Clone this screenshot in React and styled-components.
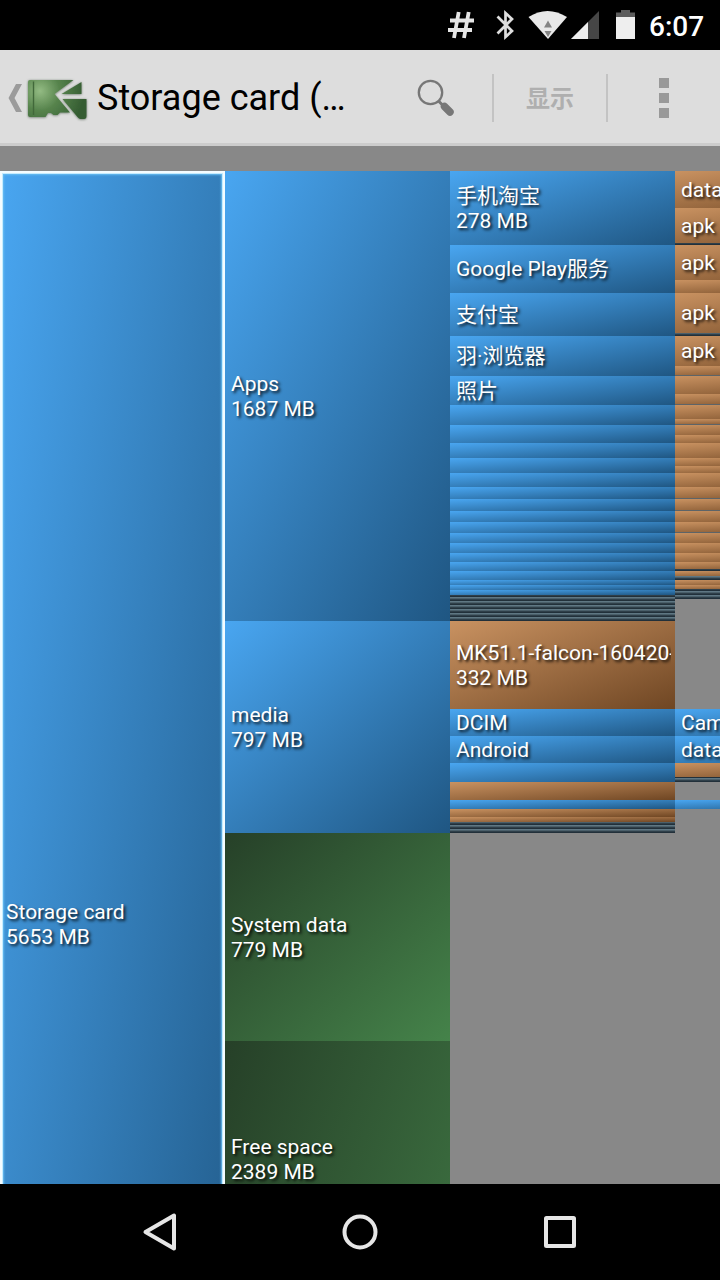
import React from "react";
import styled, { createGlobalStyle, css } from "styled-components";

const GlobalStyle = createGlobalStyle`
  * {
    box-sizing: border-box;
  }
  body {
    margin: 0;
    background: #000000;
    font-family: Roboto, "Noto Sans CJK SC", sans-serif;
  }
`;

const FILLS = {
  dir: "linear-gradient(to bottom right, #49a6f1, #1f5682)",
  file: "linear-gradient(to bottom right, #c99261, #6f4623)",
  system: "linear-gradient(to bottom right, #264028, #45834a)",
  small:
    "repeating-linear-gradient(to top, #22303a 0 1px, #2f3f49 1px 2px, #4b5f6a 2px 3px, #5f7783 3px 4px)",
  line: "#5d6468",
};

const Screen = styled.div`
  display: flex;
  flex-direction: column;
  width: 720px;
  height: 1280px;
  overflow: hidden;
  background: #888888;
`;

const StatusBar = styled.div`
  display: flex;
  flex: none;
  height: 50px;
  background: #000000;
  justify-content: flex-end;
  padding-right: 16px;
`;

const StatusIcons = styled.svg`
  width: 200px;
  height: 50px;
`;

const Clock = styled.div`
  width: 59px;
  padding-left: 4px;
  color: #ffffff;
  font-size: 28px;
  font-weight: 500;
  line-height: 54px;
  white-space: nowrap;
`;

const ActionBar = styled.header`
  display: flex;
  flex: none;
  align-items: center;
  height: 96px;
  padding-top: 2px;
  padding-left: 6px;
  background: #dddddd;
  border-bottom: 3px solid #cccccc;
`;

const HomeIcon = styled.svg`
  flex: none;
  width: 84px;
  height: 48px;
`;

const Title = styled.h1`
  width: 296px;
  margin: 0 0 0 7px;
  color: #000000;
  font-size: 36px;
  font-weight: 400;
  line-height: 50px;
  white-space: nowrap;
`;

const Action = styled.div`
  display: flex;
  flex: none;
  align-items: center;
  justify-content: center;
  width: ${(props) => props.$width}px;
  height: 48px;
  border-left: ${(props) => (props.$divided ? "2px solid #c3c3c3" : "none")};
`;

const ActionText = styled.span`
  padding-bottom: 2px;
  color: #afafaf;
  font-size: 24px;
  font-weight: 700;
`;

const SearchIcon = styled.svg`
  width: 48px;
  height: 48px;
  margin-right: 14px;
`;

const TreeMap = styled.main`
  display: flex;
  flex: none;
  width: 720px;
  height: 1038px;
  padding-top: 25px;
  overflow: hidden;
  background: #888888;
`;

const Column = styled.div`
  display: flex;
  flex: none;
  flex-direction: column;
  width: 225px;
`;

const Block = styled.div`
  display: flex;
  flex: none;
  flex-direction: column;
  justify-content: center;
  height: ${(props) => props.$height}px;
  padding-top: ${(props) => (props.$height > 1 && props.$height < 600 ? 1 : 0)}px;
  padding-left: 6px;
  padding-bottom: ${(props) => props.$hidden || 0}px;
  overflow: hidden;
  background: ${(props) => FILLS[props.$kind] || "transparent"};
  ${(props) =>
    props.$selected &&
    css`
      box-shadow: inset 0 0 0 2px #f4fcff, inset 0 0 0 3px #c5ecff,
        inset 0 0 2px 4px #68bdf2;
    `}
`;

const Label = styled.div`
  width: 215px;
  height: 25px;
  overflow-x: clip;
  color: #ffffff;
  font-size: 21px;
  line-height: 25px;
  text-shadow: 2px 2px 3px rgba(0, 0, 0, 0.85);
  white-space: nowrap;
`;

const NavBar = styled.nav`
  display: flex;
  flex: none;
  align-items: center;
  justify-content: space-around;
  height: 96px;
  padding: 0 60px;
  background: #000000;
`;

const NavIcon = styled.svg`
  width: 48px;
  height: 48px;
  fill: none;
  stroke: #e6e6e6;
  stroke-width: 4;
  stroke-linejoin: round;
`;

// [kind, height, name, size, height scrolled out below]
const columns = [
  [["dir", 1508, "Storage card", "5653 MB"]],
  [
    ["dir", 450, "Apps", "1687 MB"],
    ["dir", 212, "media", "797 MB"],
    ["system", 208, "System data", "779 MB"],
    ["system", 637, "Free space", "2389 MB", 400],
  ],
  [
    ["dir", 74, "手机淘宝", "278 MB"],
    ["dir", 48, "Google Play服务"],
    ["dir", 43, "支付宝"],
    ["dir", 40, "羽·浏览器"],
    ["dir", 29, "照片"],
    ["dir", 20],
    ["dir", 18],
    ["dir", 15],
    ["dir", 15],
    ["dir", 14],
    ["dir", 12],
    ["dir", 12],
    ["dir", 11],
    ["dir", 11],
    ["dir", 10],
    ["dir", 10],
    ["dir", 9],
    ["dir", 9],
    ["dir", 9],
    ["dir", 5],
    ["dir", 5],
    ["dir", 5],
    ["small", 26],
    ["file", 88, "MK51.1-falcon-160420-", "332 MB"],
    ["dir", 27, "DCIM"],
    ["dir", 27, "Android"],
    ["dir", 19],
    ["file", 18],
    ["dir", 9],
    ["file", 8],
    ["file", 5],
    ["small", 11],
  ],
  [
    ["file", 37, "data"],
    ["file", 35, "apk"],
    ["small", 2],
    ["file", 35, "apk"],
    ["file", 13],
    ["file", 40, "apk"],
    ["small", 3],
    ["file", 30, "apk"],
    ["file", 9],
    ["line", 1],
    ["file", 18],
    ["file", 10],
    ["line", 1],
    ["file", 14],
    ["file", 5],
    ["line", 1],
    ["file", 10],
    ["file", 8],
    ["file", 15],
    ["file", 8],
    ["file", 7],
    ["file", 14],
    ["file", 11],
    ["line", 1],
    ["file", 11],
    ["line", 1],
    ["file", 11],
    ["file", 10],
    ["line", 1],
    ["file", 10],
    ["file", 10],
    ["file", 9],
    ["file", 7],
    ["small", 2],
    ["file", 5],
    ["small", 4],
    ["file", 5],
    ["file", 4],
    ["small", 10],
    ["empty", 110],
    ["dir", 27, "Camera"],
    ["dir", 27, "data"],
    ["file", 14],
    ["small", 5],
    ["empty", 18],
    ["dir", 9],
  ],
];

const renderStatusIcons = () => (
  <StatusIcons viewBox="445 0 200 50">
    <path
      d="M458.7 12 L454 38 M468.7 12 L464 38 M450 20.5 H474 M448 30 H472"
      fill="none"
      stroke="#e6e6e6"
      strokeWidth="3.8"
    />
    <path
      d="M497.5 16.5 L512 31 L505.5 37 V13 L512 19 L497.5 33.5"
      fill="none"
      stroke="#dedede"
      strokeWidth="2.7"
    />
    <path d="M528.5 17 Q547.5 5 567 17 L548 39 Z" fill="#e9e9e9" />
    <path d="M544 27.5 L548 20.5 L552 27.5 Z M544.5 31 H551.5 L548 37 Z" fill="#858585" />
    <path d="M571 39 L599 11 V39 Z" fill="#464646" />
    <path d="M571 39 L588 22 V39 Z" fill="#eeeeee" />
    <path d="M616 17 V12.5 H621 V10 H630 V12.5 H635 V17 Z" fill="#5c5c5c" />
    <path d="M616 17 H635 V39 H616 Z" fill="#eeeeee" />
  </StatusIcons>
);

const renderHomeIcon = () => (
  <HomeIcon viewBox="6 74 84 48">
    <defs>
      <radialGradient id="card" gradientUnits="userSpaceOnUse" cx="40" cy="91" r="44">
        <stop offset="0" stopColor="#93bb83" />
        <stop offset="0.45" stopColor="#56834c" />
        <stop offset="1" stopColor="#355d32" />
      </radialGradient>
      <filter id="cardShadow" x="-20%" y="-20%" width="140%" height="140%">
        <feDropShadow dx="0" dy="0.5" stdDeviation="0.8" floodColor="#344a30" floodOpacity="0.7" />
      </filter>
    </defs>
    <path d="M22 84 H16 L8.5 98 L16 112 H22 L14.5 98 Z" fill="#9b9b9b" />
    <g fill="url(#card)" filter="url(#cardShadow)">
      <path d="M30 80 H73.5 L54.5 94 L70 112.5 H60 L57.5 115 H53.5 L51 113 H48 L45.5 117 H30 Q28 117 28 115 V82 Q28 80 30 80 Z" />
      <path d="M81.5 82 V94 H61.5 Z" />
      <path d="M62.5 99 H86.5 V116 Q86.5 119 84 119 H80.5 Q79 119 77.5 117 Z" />
    </g>
    <path d="M33.5 81.5 V115" stroke="#41683a" strokeWidth="1.4" />
  </HomeIcon>
);

const renderBlock = ([kind, height, name, size, hidden], index, selected) => (
  <Block
    key={index}
    $kind={kind}
    $height={height}
    $hidden={hidden}
    $selected={selected}
  >
    {name && <Label>{name}</Label>}
    {size && <Label>{size}</Label>}
  </Block>
);

export default function App() {
  return (
    <Screen>
      <GlobalStyle />
      <StatusBar>
        {renderStatusIcons()}
        <Clock>6:07</Clock>
      </StatusBar>
      <ActionBar>
        {renderHomeIcon()}
        <Title>Storage card (…</Title>
        <Action $width={99}>
          <SearchIcon viewBox="412 74 48 48">
            <circle cx="430.5" cy="92.5" r="11.7" fill="none" stroke="#777777" strokeWidth="2.3" />
            <path d="M438.5 101 L443 105.5" stroke="#777777" strokeWidth="3" />
            <path d="M444.5 106.5 L450 112" stroke="#777777" strokeWidth="7.5" strokeLinecap="round" />
          </SearchIcon>
        </Action>
        <Action $width={114} $divided>
          <ActionText>显示</ActionText>
        </Action>
        <Action $width={114} $divided>
          <svg width="10" height="40" viewBox="0 0 10 40" fill="#999999">
            <path d="M0 0 H10 V10 H0 Z M0 15 H10 V25 H0 Z M0 30 H10 V40 H0 Z" />
          </svg>
        </Action>
      </ActionBar>
      <TreeMap>
        {columns.map((blocks, col) => (
          <Column key={col}>
            {blocks.map((block, i) => renderBlock(block, i, col === 0))}
          </Column>
        ))}
      </TreeMap>
      <NavBar>
        <NavIcon viewBox="0 0 48 48">
          <path d="M38 7.5 V40.5 L9.5 24 Z" />
        </NavIcon>
        <NavIcon viewBox="0 0 48 48">
          <circle cx="24" cy="24" r="15.5" />
        </NavIcon>
        <NavIcon viewBox="0 0 48 48">
          <rect x="10" y="10" width="28" height="28" rx="0.5" />
        </NavIcon>
      </NavBar>
    </Screen>
  );
}
